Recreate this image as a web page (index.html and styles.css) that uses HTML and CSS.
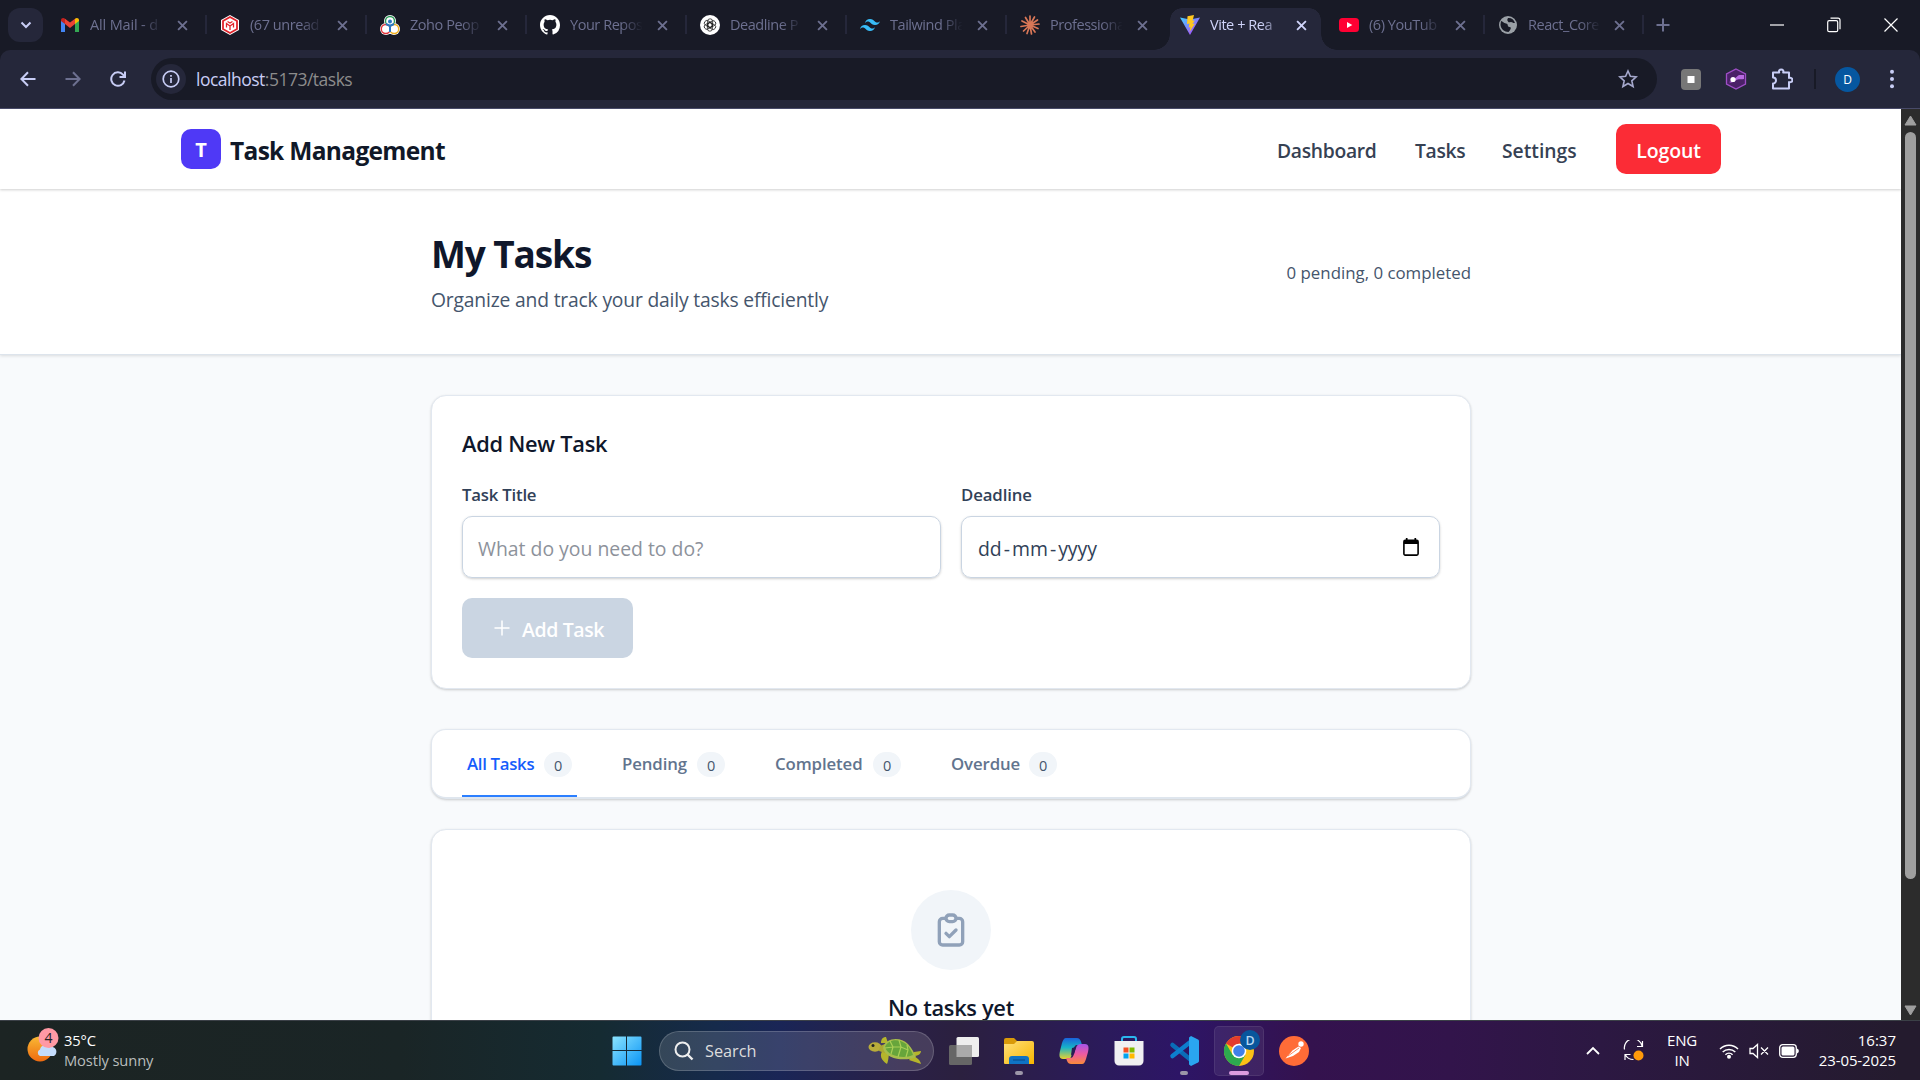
FILE: index.html
```html
<!DOCTYPE html>
<html lang="en">
<head>
<meta charset="utf-8">
<title>Task Management</title>
<link rel="stylesheet" href="styles.css">
</head>
<body>
<svg class="defs" width="0" height="0" aria-hidden="true">
  <defs>
    <symbol id="x" viewBox="0 0 10 10"><path d="M1 1l8 8M9 1L1 9" fill="none" stroke="currentColor" stroke-width="1.7"/></symbol>
    <linearGradient id="viteA" x1="0" y1="0" x2="1" y2="1"><stop offset="0" stop-color="#41d1ff"/><stop offset="1" stop-color="#bd34fe"/></linearGradient>
    <linearGradient id="win" x1="0" y1="0" x2="1" y2="1"><stop offset="0" stop-color="#8be4ff"/><stop offset="1" stop-color="#0a94f5"/></linearGradient>
    <linearGradient id="sun" x1="0" y1="0" x2="0" y2="1"><stop offset="0" stop-color="#f9b934"/><stop offset="1" stop-color="#ee6a10"/></linearGradient>
    <linearGradient id="fold" x1="0" y1="0" x2="1" y2="1"><stop offset="0" stop-color="#ffe07a"/><stop offset="1" stop-color="#f8b500"/></linearGradient>
    <linearGradient id="copA" x1="0" y1="0" x2="0" y2="1"><stop offset="0" stop-color="#1a62dc"/><stop offset=".45" stop-color="#17b3c8"/><stop offset="1" stop-color="#e8d12e"/></linearGradient>
    <linearGradient id="copB" x1="0" y1="0" x2="0" y2="1"><stop offset="0" stop-color="#a454e8"/><stop offset=".5" stop-color="#ee5aa2"/><stop offset="1" stop-color="#f98b3a"/></linearGradient>
  </defs>
</svg>

<header class="browser">
  <div class="strip">
    <div class="tab-search"><svg width="12" height="8" viewBox="0 0 12 8"><path d="M1.5 1.5L6 6l4.500-4.500" fill="none" stroke="currentColor" stroke-width="2"/></svg></div>
    <div class="tabs">
      <div class="tab">
        <svg class="fav" viewBox="0 0 20 20"><path d="M1 17V5l4 3v9z" fill="#4285f4"/><path d="M15 8l4-3v12h-4z" fill="#34a853"/><path d="M1 5.500C1 2.800 3.500 2.500 5 3.700V9L1 6z" fill="#c5221f"/><path d="M5 3.700L10 7.500l5-3.800V9l-5 3.900L5 9z" fill="#ea4335"/><path d="M15 3.700c1.500-1.200 4-.9 4 1.800V6l-4 3z" fill="#fbbc04"/></svg>
        <span class="name">All Mail - d</span><svg class="close"><use href="#x"/></svg>
      </div>
      <div class="tab">
        <svg class="fav" viewBox="0 0 20 20"><path d="M10 0l9 5v10l-9 5-9-5V5z" fill="#fff"/><path d="M10 2l7 4v8l-7 4-7-4V6z" fill="none" stroke="#e0252c" stroke-width="1.800"/><path d="M10 15v-4L6.500 8.500v4M10 11l3.500-2.500v4M7.500 6.500l2.500 1.500 2.500-1.500" fill="none" stroke="#e0252c" stroke-width="1.300"/></svg>
        <span class="name">(67 unread</span><svg class="close"><use href="#x"/></svg>
      </div>
      <div class="tab">
        <svg class="fav" viewBox="0 0 20 20"><circle cx="10" cy="6" r="6" fill="#fff"/><circle cx="6" cy="14" r="6" fill="#fff"/><circle cx="14" cy="14" r="6" fill="#fff"/><g fill="none" stroke-width="1.400"><circle cx="10" cy="6" r="4.500" stroke="#2b9a58"/><circle cx="5.800" cy="14" r="4.500" stroke="#e2353c"/><circle cx="14.200" cy="14" r="4.500" stroke="#f2b01e"/><path d="M6 9l4 2 4-2M10 11v6" stroke="#2b78c5" stroke-width="2"/></g><circle cx="10" cy="6.500" r="2" fill="#2b78c5"/></svg>
        <span class="name">Zoho Peop</span><svg class="close"><use href="#x"/></svg>
      </div>
      <div class="tab">
        <svg class="fav" viewBox="0 0 16 16"><path fill="#fff" d="M8 0C3.580 0 0 3.580 0 8c0 3.540 2.290 6.530 5.470 7.590.4.070.55-.17.55-.38v-1.340c-2.230.48-2.690-1.070-2.690-1.070-.36-.92-.89-1.170-.89-1.170-.73-.5.050-.49.050-.49.8.060 1.230.83 1.230.83.720 1.220 1.870.87 2.330.66.070-.52.28-.87.500-1.070-1.770-.2-3.640-.89-3.640-3.950 0-.87.310-1.590.82-2.150-.08-.2-.36-1.020.080-2.120 0 0 .67-.21 2.200.82a7.600 7.600 0 0 1 4 0c1.530-1.040 2.200-.82 2.200-.82.440 1.100.16 1.920.080 2.120.51.560.82 1.270.82 2.150 0 3.070-1.870 3.750-3.650 3.950.29.250.54.730.54 1.480v2.200c0 .21.150.46.550.38A8 8 0 0 0 16 8c0-4.420-3.580-8-8-8z"/></svg>
        <span class="name">Your Repos</span><svg class="close"><use href="#x"/></svg>
      </div>
      <div class="tab">
        <svg class="fav" viewBox="0 0 20 20"><circle cx="10" cy="10" r="10" fill="#fff"/><g fill="none" stroke="#222" stroke-width=".8"><rect x="7.600" y="3.800" width="5" height="8.500" rx="2.500"/><rect x="7.600" y="3.800" width="5" height="8.500" rx="2.500" transform="rotate(60 10 10)"/><rect x="7.600" y="3.800" width="5" height="8.500" rx="2.500" transform="rotate(120 10 10)"/><rect x="7.600" y="3.800" width="5" height="8.500" rx="2.500" transform="rotate(180 10 10)"/><rect x="7.600" y="3.800" width="5" height="8.500" rx="2.500" transform="rotate(240 10 10)"/><rect x="7.600" y="3.800" width="5" height="8.500" rx="2.500" transform="rotate(300 10 10)"/></g></svg>
        <span class="name">Deadline P</span><svg class="close"><use href="#x"/></svg>
      </div>
      <div class="tab">
        <svg class="fav" viewBox="0 0 24 24"><path fill="#38bdf8" d="M12 4.800C8.800 4.800 6.800 6.400 6 9.600c1.200-1.600 2.600-2.200 4.200-1.800.91.230 1.570.89 2.290 1.620C13.670 10.620 15.030 12 18 12c3.200 0 5.200-1.600 6-4.800-1.200 1.600-2.600 2.200-4.200 1.800-.91-.23-1.570-.89-2.290-1.620C16.340 6.180 14.970 4.800 12 4.800zM6 12c-3.200 0-5.200 1.600-6 4.800 1.200-1.600 2.600-2.200 4.200-1.800.91.230 1.570.89 2.290 1.620C7.670 17.820 9.030 19.200 12 19.200c3.200 0 5.200-1.600 6-4.800-1.200 1.600-2.600 2.200-4.200 1.800-.91-.23-1.570-.89-2.290-1.620C10.340 13.380 8.970 12 6 12z"/></svg>
        <span class="name">Tailwind Pla</span><svg class="close"><use href="#x"/></svg>
      </div>
      <div class="tab">
        <svg class="fav" viewBox="0 0 20 20"><g stroke="#d97757" stroke-width="1.700" stroke-linecap="round"><path d="M10 10V1M10 10l4.500-8M10 10l7.500-5M10 10l9-1M10 10l8 3.500M10 10l5 7M10 10l1.500 9M10 10l-3 8.500M10 10l-6.500 6M10 10l-9 1.500M10 10L2 6M10 10L5.500 2.500"/></g><circle cx="10" cy="10" r="2.500" fill="#d97757"/></svg>
        <span class="name">Professiona</span><svg class="close"><use href="#x"/></svg>
      </div>
      <div class="tab active">
        <svg class="fav" viewBox="0 0 20 20"><path d="M0 2.500l10 2 10-2L10 20z" fill="url(#viteA)"/><path d="M14 0L7.500 1.300 7 9l2.500-.5-.8 4 1.800-.5L9.500 17l5.500-8.500-2.500.5 2.300-3.500-2.200.3z" fill="#ffc820"/></svg>
        <span class="name">Vite + Rea</span><svg class="close"><use href="#x"/></svg>
      </div>
      <div class="tab">
        <svg class="fav" viewBox="0 0 20 20"><rect y="3" width="20" height="14" rx="3.500" fill="#ff0033"/><path d="M8 7l5.300 3L8 13z" fill="#fff"/></svg>
        <span class="name">(6) YouTub</span><svg class="close"><use href="#x"/></svg>
      </div>
      <div class="tab">
        <svg class="fav" viewBox="0 0 20 20"><circle cx="10" cy="10" r="9" fill="#9aa0a6"/><path d="M3 6c2 0 2.500 2.500 5 2.500s1 3.500 3.500 3.500 1 3-1 5c-4 0-8-3-8-7.500zM10 3c3-.5 6 1.500 7 5-2 .5-2.500-1-4-1s-2 1-3-.5S9 5 10 3z" fill="#181a26"/></svg>
        <span class="name">React_Core</span><svg class="close"><use href="#x"/></svg>
      </div>
    </div>
    <svg class="new-tab" width="14" height="14" viewBox="0 0 14 14"><path d="M7 .5v13M.5 7h13" stroke="currentColor" stroke-width="2"/></svg>
    <div class="window-buttons">
      <svg width="14" height="14" viewBox="0 0 14 14"><path d="M0 7h14" stroke="#fff" stroke-width="1.200"/></svg>
      <svg width="14" height="16" viewBox="0 0 14 16" fill="none" stroke="#fff" stroke-width="1.200"><rect x=".7" y="3.700" width="10" height="11" rx="1.500"/><path d="M3.500 1.200H11a2 2 0 0 1 2 2v9"/></svg>
      <svg width="14" height="14" viewBox="0 0 14 14"><path d="M.5.5l13 13M13.500.5l-13 13" stroke="#fff" stroke-width="1.200"/></svg>
    </div>
  </div>
  <div class="toolbar">
    <div class="nav-buttons">
      <svg width="16" height="16" viewBox="0 0 16 16"><path d="M15.500 8H1.500M8 1.200L1.400 8 8 14.800" fill="none" stroke="currentColor" stroke-width="2"/></svg>
      <svg class="dim" width="16" height="16" viewBox="0 0 16 16"><path d="M.5 8h14M8 1.200L14.600 8 8 14.800" fill="none" stroke="currentColor" stroke-width="2"/></svg>
      <svg width="16" height="16" viewBox="0 0 16 16"><path d="M14.500 9.500A6.700 6.700 0 1 1 13 3.600L15 6M15 .5V6H9.500" fill="none" stroke="currentColor" stroke-width="2"/></svg>
    </div>
    <div class="omnibox">
      <div class="site-info"><svg width="18" height="18" viewBox="0 0 18 18" fill="none" stroke="currentColor" stroke-width="1.700"><circle cx="9" cy="9" r="7.800"/><path d="M9 8v5M9 5v1.700"/></svg></div>
      <span class="url"><b>localhost</b>:5173/tasks</span>
      <svg class="star" width="20" height="20" viewBox="0 0 20 20"><path d="M10 2l2.400 5.300 5.800.6-4.400 3.900 1.300 5.700-5.100-3-5.100 3 1.300-5.700-4.400-3.900 5.800-.6z" fill="none" stroke="currentColor" stroke-width="1.600"/></svg>
    </div>
    <div class="extensions">
      <svg width="20" height="21" viewBox="0 0 20 21"><rect width="20" height="21" rx="4" fill="#777"/><rect x="6.500" y="7" width="7" height="7" fill="#fff"/></svg>
      <svg width="22" height="22" viewBox="0 0 22 22"><path d="M11 1l9.500 5v10L11 21l-9.500-5V6z" fill="#4b2168" stroke="#a04fc8" stroke-width="1.300"/><path d="M4 14c2.500 0 3-4 5.500-4s3-3.500 5.500-3h4v4c-4 1-5-.5-7.500 1S7 15.500 4 14z" fill="#b76ae0"/><circle cx="8" cy="11.500" r="2.600" fill="#fff"/></svg>
      <svg width="22" height="22" viewBox="0 0 22 22"><path d="M2 4.500h6.200a2.200 2.200 0 1 1 4 0H18V10a2.300 2.300 0 1 1 0 4v6.500H2V15.500a3 3 0 0 0 0-6z" fill="none" stroke="currentColor" stroke-width="2" stroke-linejoin="round"/></svg>
      <i class="divider"></i>
      <span class="avatar">D</span>
      <svg class="dots" width="6" height="20" viewBox="0 0 6 20"><circle cx="3" cy="2.800" r="2"/><circle cx="3" cy="10" r="2"/><circle cx="3" cy="17.200" r="2"/></svg>
    </div>
  </div>
</header>

<div class="viewport">
  <div class="page">
    <nav class="navbar">
      <div class="brand"><span class="logo">T</span><span class="brand-name">Task Management</span></div>
      <div class="links">
        <a class="link dash">Dashboard</a><a class="link tsk">Tasks</a><a class="link set">Settings</a>
        <button class="logout">Logout</button>
      </div>
    </nav>
    <section class="heading">
      <div>
        <h1>My Tasks</h1>
        <p class="sub">Organize and track your daily tasks efficiently</p>
      </div>
      <p class="summary">0 pending, 0 completed</p>
    </section>
    <main>
      <section class="card form">
        <h2>Add New Task</h2>
        <div class="fields">
          <div class="field">
            <span class="label title-label">Task Title</span>
            <div class="input"><span class="placeholder">What do you need to do?</span></div>
          </div>
          <div class="field">
            <span class="label">Deadline</span>
            <div class="input date"><span class="date-text">dd<i>-</i>mm<i>-</i>yyyy</span><svg width="16" height="18" viewBox="0 0 16 18"><path d="M3.700 0v3M12.300 0v3" stroke="#000" stroke-width="1.700"/><rect x=".9" y="2.400" width="14.200" height="14.700" rx="1.300" fill="none" stroke="#000" stroke-width="1.600"/><path d="M1 2h14v4H1z"/></svg></div>
          </div>
        </div>
        <button class="add"><svg width="16" height="16" viewBox="0 0 16 16"><path d="M8 .5v15M.5 8h15" stroke="#fff" stroke-width="1.500"/></svg><span>Add Task</span></button>
      </section>
      <section class="card filters">
        <div class="filter on"><span class="f1">All Tasks</span><b>0</b></div>
        <div class="filter"><span class="f2">Pending</span><b>0</b></div>
        <div class="filter"><span class="f3">Completed</span><b>0</b></div>
        <div class="filter"><span class="f4">Overdue</span><b>0</b></div>
      </section>
      <section class="card empty">
        <div class="empty-icon"><svg width="40" height="40" viewBox="0 0 24 24" fill="none" stroke="#90a1b9" stroke-width="2" stroke-linecap="round" stroke-linejoin="round"><path d="M9 5H7a2 2 0 00-2 2v12a2 2 0 002 2h10a2 2 0 002-2V7a2 2 0 00-2-2h-2M9 5a2 2 0 002 2h2a2 2 0 002-2M9 5a2 2 0 012-2h2a2 2 0 012 2m-6 9l2 2 4-4"/></svg></div>
        <h3>No tasks yet</h3>
      </section>
    </main>
  </div>
  <div class="scrollbar">
    <svg width="13" height="11" viewBox="0 0 13 11"><path d="M6.500 1L12 10H1z" fill="#9f9f9f" stroke="#9f9f9f" stroke-linejoin="round"/></svg>
    <i class="thumb"></i>
    <svg width="13" height="11" viewBox="0 0 13 11"><path d="M6.500 10L12 1H1z" fill="#9f9f9f" stroke="#9f9f9f" stroke-linejoin="round"/></svg>
  </div>
</div>

<footer class="taskbar">
  <div class="weather">
    <svg width="34" height="38" viewBox="0 0 34 38"><circle cx="14" cy="22" r="12.500" fill="url(#sun)"/><path d="M14 29a3.500 3.500 0 0 1 0-6.500 5 5 0 0 1 9-2 4.500 4.500 0 0 1 5 8.500z" fill="#c4dcfb"/><circle cx="22.500" cy="11" r="10" fill="#ff99a4"/><text x="22.500" y="16" text-anchor="middle" class="badge-text">4</text></svg>
    <div class="weather-text"><span>35°C</span><span class="muted">Mostly sunny</span></div>
  </div>
  <div class="apps">
    <div class="app start"><svg width="30" height="30" viewBox="0 0 30 30"><path d="M1.500.5H14V14H.5V1.500a1 1 0 0 1 1-1zM15 .5h13.500a1 1 0 0 1 1 1V14H15zM.5 15H14v14.500H1.500a1 1 0 0 1-1-1zM15 15h14.500v13.500a1 1 0 0 1-1 1H15z" fill="url(#win)"/></svg></div>
    <div class="search">
      <svg width="20" height="20" viewBox="0 0 20 20" fill="none" stroke="#eee" stroke-width="2"><circle cx="8.500" cy="8.500" r="7"/><path d="M13.500 13.500l5 5" stroke-width="2.400"/></svg>
      <span>Search</span>
      <svg class="turtle" width="54" height="30" viewBox="0 0 54 30"><path d="M13 7c0-4 2-6 5-6l2 6zM15 14c-4 5-2 10 4 14 2-4 1-9 3-12zM41 24l12 4c-1-4-4-7-9-8zM46 16l7-1c0 3-3 5-8 5z" fill="#b5b52c"/><ellipse cx="7" cy="11" rx="6.500" ry="4.700" fill="#b9ac3a"/><path d="M12 10l5-2v9l-6-2z" fill="#aaa832"/><path d="M15 12C17 2 32 0 40 8c4 4 6 9 8 13-8 4-30 4-33-9z" fill="#a7bd4c"/><path d="M17 11C20 3 31 2 38 8c4 4 6 8 7 11-8 4-25 2-28-8z" fill="#67a53b"/><path d="M22 5l3 6-2 7M31 4l2 7-3 10M39 9l1 5-2 7M17 12l8-1 8 0 7 3" fill="none" stroke="#a9cf57" stroke-width="1.200"/><circle cx="5" cy="9.500" r="1.500" fill="#222"/></svg>
    </div>
    <div class="app"><svg width="30" height="28" viewBox="0 0 30 28"><rect x="7.500" y="0" width="22.500" height="20" rx="1.500" fill="#eee"/><rect y="8" width="23" height="20" rx="1.500" fill="#666"/><path d="M7.500 8H23v12H7.500z" fill="#aaa"/></svg></div>
    <div class="app run"><svg width="30" height="28" viewBox="0 0 30 28"><path d="M0 3a2 2 0 0 1 2-2h8l3 3v4H0z" fill="#d99a09"/><path d="M0 7h10l3-3h15a2 2 0 0 1 2 2v21H1a1 1 0 0 1-1-1z" fill="url(#fold)"/><path d="M5 27v-5a3 3 0 0 1 3-3h14a3 3 0 0 1 3 3v5z" fill="#0f73c4"/><path d="M9 23h12" stroke="#0a4f91" stroke-width="1.200"/></svg></div>
    <div class="app"><svg width="30" height="28" viewBox="0 0 30 28"><path d="M7 1h11c3 0 4 3 5 7h-5c-2 0-3 2-4 5l-2 7c-1 2-2 2-4 2H4c-4 0-4-4-3-8l2-8c1-3 2-5 4-5z" fill="url(#copA)"/><path d="M23 27H12c-3 0-4-3-5-6h4c2 0 3-1 4-4l2-6c1-3 2-4 5-4h4c4 0 4 4 3 8l-2 7c-1 3-2 5-4 5z" fill="url(#copB)"/><path d="M13 11l4-1-2 7-3 1z" fill="#2a1c55"/></svg></div>
    <div class="app"><svg width="30" height="30" viewBox="0 0 30 30"><path d="M8 6V3a2 2 0 0 1 2-2h10a2 2 0 0 1 2 2v3" fill="none" stroke="#2bb7ee" stroke-width="2"/><path d="M.5 5h29v20a4.500 4.500 0 0 1-4.500 4.500H5A4.500 4.500 0 0 1 .5 25z" fill="#f0f0f2"/><path d="M9.500 11.500h5v5h-5z" fill="#f25022"/><path d="M15.500 11.500h5v5h-5z" fill="#7fba00"/><path d="M9.500 17.500h5v5h-5z" fill="#00a4ef"/><path d="M15.500 17.500h5v5h-5z" fill="#ffb900"/></svg></div>
    <div class="app run"><svg width="30" height="30" viewBox="0 0 30 30"><path d="M3.500 9L22 24" stroke="#0a6db8" stroke-width="4.500" stroke-linecap="round"/><path d="M3.500 20L22 5.500" stroke="#0d7fce" stroke-width="4.500" stroke-linecap="round"/><path d="M22 0l7 3.500a2 2 0 0 1 1 1.500v20a2 2 0 0 1-1 1.500L22 30l-2-1.500V1.500z" fill="#2aa5f0"/></svg></div>
    <div class="app current"><svg width="38" height="38" viewBox="0 0 38 38"><circle cx="15" cy="23" r="15" fill="#fbc116"/><path d="M15 23L2 15.500A15 15 0 0 1 28 15.500H15z" fill="#e33b2e"/><path d="M2 15.500a15 15 0 0 0 13 22.500l6.500-11.300L8.500 26.700z" fill="#2da94f"/><circle cx="15" cy="23" r="7.300" fill="#fff"/><circle cx="15" cy="23" r="5.800" fill="#3f80ea"/><circle cx="26" cy="12" r="10" fill="#08569c"/><text x="26" y="16.500" text-anchor="middle" class="profile-text">D</text></svg></div>
    <div class="app"><svg width="30" height="30" viewBox="0 0 30 30"><circle cx="15" cy="15" r="15" fill="#ff6c37"/><path d="M6.500 22.500l7-8 6-4 2.500 1.500-2 4-6 4z" fill="#fff"/><circle cx="22" cy="8" r="2.700" fill="#fff"/><path d="M9 20l11-8" stroke="#ff6c37" stroke-width=".8"/></svg></div>
  </div>
  <div class="tray">
    <svg width="14" height="9" viewBox="0 0 14 9"><path d="M1 8l6-6 6 6" fill="none" stroke="#fff" stroke-width="1.800"/></svg>
    <svg class="sync" width="22" height="22" viewBox="0 0 22 22" fill="none" stroke="#fff" stroke-width="1.200"><path d="M1.500 9.500A8.500 8.500 0 0 1 19 6M19.500 1v5.500h-5.500M2 20v-5.500h5.500M2.500 15c1.500 3 5 4.500 8 4.500"/><circle cx="15.500" cy="15.500" r="5" fill="#ff9a0a" stroke="none"/></svg>
    <div class="lang"><span>ENG</span><span>IN</span></div>
    <svg class="wifi" width="20" height="16" viewBox="0 0 20 16" fill="none" stroke="#fff" stroke-width="1.500"><path d="M1 6a12.700 12.700 0 0 1 18 0M3.700 9a9 9 0 0 1 12.600 0M6.400 11.700a5.200 5.200 0 0 1 7.200 0"/><circle cx="10" cy="13.800" r="2" fill="#fff" stroke="none"/></svg>
    <svg class="sound" width="20" height="16" viewBox="0 0 20 16" fill="none" stroke="#fff" stroke-width="1.300"><path d="M1 5.500h3L8.500 1.500v13L4 10.500H1zM12 4.500l7 7M19 4.500l-7 7"/></svg>
    <svg class="battery" width="21" height="14" viewBox="0 0 21 14"><rect x=".7" y=".7" width="16.600" height="12.600" rx="3" fill="none" stroke="#fff" stroke-width="1.300"/><rect x="2.500" y="2.500" width="13" height="9" rx="1.500" fill="#fff"/><path d="M18 4.500a2.600 2.600 0 0 1 0 5z" fill="#fff"/></svg>
    <div class="clock"><span>16:37</span><span class="day">23-05-2025</span></div>
  </div>
</footer>
</body>
</html>
```
FILE: styles.css
```css
* { box-sizing: border-box; margin: 0; padding: 0; }
body { width: 1920px; height: 1080px; overflow: hidden; display: flex; flex-direction: column; font-family: "Open Sans", "Noto Sans", sans-serif; background: #f8fafc; }
svg { display: block; flex: none; }
.defs { position: absolute; }
button { border: 0; font-family: inherit; }
span, a { white-space: nowrap; }

/* browser chrome */
.browser { height: 109px; flex: none; background: #181a26; border-bottom: 1px solid #484a68; }
.strip { height: 50px; display: flex; align-items: center; padding-left: 8px; }
.tab-search { width: 35px; height: 34px; border-radius: 12px; background: #25273a; color: #c8cdf5; display: flex; align-items: center; justify-content: center; margin-right: 4px; }
.tabs { display: flex; height: 50px; }
.tab { position: relative; width: 160px; height: 50px; padding-left: 13px; display: flex; align-items: center; color: #6d7090; }
.tab::after { content: ""; position: absolute; right: 0; top: 15px; width: 2px; height: 19px; background: #25273a; }
.tab:nth-child(n+8) { width: 159px; }
.tab:nth-child(7)::after, .tab.active::after { display: none; }
.fav { width: 20px; height: 20px; position: relative; }
.name { position: relative; width: 75px; margin-left: 10px; overflow: hidden; font-size: 14.500px; letter-spacing: -.45px; line-height: 22px; -webkit-mask-image: linear-gradient(90deg, #000 68%, transparent 97%); mask-image: linear-gradient(90deg, #000 68%, transparent 97%); }
.tab:first-child .name { letter-spacing: -.15px; }
.close { position: relative; width: 11px; height: 11px; margin-left: 12px; }
.tab:nth-child(n+8) .close { margin-left: 11px; }
.active { color: #d0d4fa; }
.active::before { content: ""; position: absolute; left: -13px; top: 8px; width: 183px; height: 42px; background:
  radial-gradient(circle at 0 0, transparent 15.500px, #25273a 16px) 0 26px / 16px 16px no-repeat,
  radial-gradient(circle at 16px 0, transparent 15.500px, #25273a 16px) 167px 26px / 16px 16px no-repeat,
  radial-gradient(circle at 12px 12px, #25273a 11.500px, transparent 12px) 16px 0 / 12px 12px no-repeat,
  radial-gradient(circle at 0 12px, #25273a 11.500px, transparent 12px) 155px 0 / 12px 12px no-repeat,
  linear-gradient(#25273a, #25273a) 28px 0 / 127px 42px no-repeat,
  linear-gradient(#25273a, #25273a) 16px 12px / 151px 30px no-repeat; }
.new-tab { color: #6d7090; margin-left: 12px; }
.window-buttons { margin-left: auto; margin-right: 22px; display: flex; gap: 43px; align-items: center; }
.toolbar { height: 58px; background: #25273a; border-radius: 10px 10px 0 0; display: flex; align-items: center; padding-left: 20px; }
.nav-buttons { display: flex; gap: 29px; color: #c8cdf5; }
.nav-buttons .dim { color: #6d7090; }
.omnibox { width: 1506px; height: 42px; margin-left: 25px; padding: 0 19px 0 5px; border-radius: 21px; background: #181a26; display: flex; align-items: center; }
.site-info { width: 30px; height: 30px; border-radius: 50%; background: #25273a; color: #c8cdf5; display: flex; align-items: center; justify-content: center; }
.url { margin-left: 10px; font-size: 17.500px; letter-spacing: -.5px; color: #8c8c8c; }
.url b { font-weight: 400; color: #c8cdf5; }
.star { margin-left: auto; color: #a5a8cc; }
.extensions { display: flex; align-items: center; margin-left: 24px; color: #c8cdf5; }
.extensions svg + svg { margin-left: 24px; }
.divider { width: 2px; height: 20px; margin-left: 21px; background: #181a26; }
.avatar { width: 25px; height: 25px; margin-left: 19px; border-radius: 50%; background: #0657a0; color: #fff; font-size: 12px; line-height: 25px; text-align: center; }
.extensions .dots { margin-left: 29px; fill: #c8cdf5; }

/* page */
.viewport { height: 911px; flex: none; display: flex; overflow: hidden; }
.page { width: 1901px; height: 911px; overflow: hidden; color: #0f172b; }
.navbar { position: relative; height: 80px; padding: 0 180px 0 181px; display: flex; justify-content: space-between; align-items: center; background: #fff; box-shadow: 0 1px 3px rgba(0,0,0,.12), 0 1px 2px rgba(0,0,0,.08); }
.brand { display: flex; align-items: center; }
.logo { width: 40px; height: 40px; border-radius: 10px; background: #4f39f6; color: #fff; font-size: 20px; font-weight: 700; line-height: 41px; text-align: center; }
.brand-name { margin-left: 9px; font-size: 24.500px; letter-spacing: -.68px; font-weight: 700; line-height: 40px; padding-top: 3px; color: #101828; }
.links { display: flex; align-items: center; }
.link { font-size: 19.300px; letter-spacing: -.3px; font-weight: 550; color: #364153; margin-right: 40px; padding-top: 2px; }
.dash { width: 98px; } .tsk { width: 47px; } .set { width: 74px; letter-spacing: 0; }
.logout { width: 105px; height: 50px; padding-top: 2px; border-radius: 10px; background: #fb2c36; color: #fff; font-size: 19.500px; letter-spacing: -.1px; font-weight: 600; }
.heading { height: 166px; padding: 0 430px 0 431px; display: flex; align-items: center; justify-content: space-between; background: #fff; border-bottom: 1px solid #dde4ec; box-shadow: 0 1px 3px rgba(0,0,0,.12); }
.heading > div { padding-top: 2px; }
h1 { font-size: 37px; letter-spacing: -1.100px; font-weight: 700; line-height: 45px; }
.sub { font-size: 19.300px; letter-spacing: -.18px; line-height: 30px; margin-top: 9px; color: #45556c; }
.summary { font-size: 16.850px; color: #45556c; padding-top: 2px; }
main { padding: 40px 430px 0 431px; display: flex; flex-direction: column; }
.card { background: #fff; border: 1px solid #e2e8f0; border-radius: 15px; box-shadow: 0 1px 3px rgba(0,0,0,.12), 0 1px 2px rgba(0,0,0,.08); }
.form { height: 294px; padding: 30px; }
h2 { font-size: 21.800px; letter-spacing: -.25px; font-weight: 550; line-height: 35px; }
.fields { display: flex; gap: 20px; margin-top: 21px; }
.field { flex: 1; }
.label { display: block; font-size: 16.800px; letter-spacing: -.12px; font-weight: 550; line-height: 25px; color: #314158; }
.title-label { letter-spacing: -.22px; }
.input { height: 62px; margin-top: 9px; padding: 2px 15px 0; border: 1px solid #cad5e2; border-radius: 10px; box-shadow: 0 1px 3px rgba(0,0,0,.12), 0 1px 2px rgba(0,0,0,.08); display: flex; align-items: center; font-size: 19.400px; color: #314158; }
.placeholder { color: #8d929b; }
.date { justify-content: space-between; padding: 2px 20px 0 16px; }
.date svg { margin-top: -2px; }
.date-text i { font-style: normal; margin: 0 2px; }
.add { width: 171px; height: 60px; margin-top: 20px; border-radius: 10px; background: #cad5e2; color: #fff; display: flex; align-items: center; padding-left: 32px; font-size: 19.500px; letter-spacing: -.4px; font-weight: 600; }
.add span { margin-left: 12px; padding-top: 2px; }
.filters { height: 70px; margin-top: 40px; padding: 0 30px; display: flex; gap: 40px; border-bottom: 2px solid #dfe6ee; }
.filter { height: 67px; padding: 0 5px; display: flex; align-items: flex-start; padding-top: 22px; font-size: 16.800px; letter-spacing: -.1px; font-weight: 550; line-height: 24px; color: #62748e; }
.filter b { width: 28px; height: 25px; margin-left: 10px; border-radius: 13px; background: #f1f5f9; color: #45556c; font-size: 14.500px; font-weight: 500; line-height: 27px; text-align: center; }
.on { color: #155dfc; border-bottom: 2px solid #2b7fff; }
.f1 { width: 67px; letter-spacing: -.3px; } .f2 { width: 65px; } .f3 { width: 88px; } .f4 { width: 68px; }
.empty { height: 300px; margin-top: 30px; padding-top: 60px; display: flex; flex-direction: column; align-items: center; }
.empty-icon { width: 80px; height: 80px; border-radius: 50%; background: #f1f5f9; display: flex; align-items: center; justify-content: center; }
h3 { margin-top: 20px; font-size: 21.800px; letter-spacing: -.3px; font-weight: 550; line-height: 35px; }
.scrollbar { width: 19px; background: #2c2c2c; display: flex; flex-direction: column; align-items: center; padding: 6px 0 4px; }
.thumb { width: 11px; height: 747px; margin: 6px 0 auto; border-radius: 6px; background: #9f9f9f; }

/* taskbar */
.taskbar { height: 60px; flex: none; display: flex; border-top: 1px solid #3b4047; color: #fff; background: linear-gradient(90deg, #1c2423 0, #1a2526 400px, #152b32 600px, #162a4c 720px, #1a2556 780px, #2a2047 900px, #2b203f 960px, #2b1a5c 1110px, #2d1566 1180px, #34124e 1310px, #32144b 1450px, #2c1842 1600px, #241b2e 1900px); }
.weather { width: 575px; display: flex; padding: 6px 0 0 26px; }
.weather-text { display: flex; flex-direction: column; margin-left: 4px; margin-top: 3px; font-size: 14.700px; letter-spacing: -.1px; line-height: 20px; }
.muted { color: #b9bdbd; }
.badge-text { font-size: 14px; fill: #222; }
.profile-text { font-size: 12.500px; font-weight: 600; fill: #b9d7f2; }
.apps { display: flex; align-items: center; gap: 5px; padding-left: 27px; }
.app { position: relative; width: 50px; height: 50px; display: flex; align-items: center; justify-content: center; border-radius: 5px; }
.start { margin-right: 2px; }
.search { width: 275px; height: 40px; border: 1px solid #ffffff2e; border-radius: 20px; background: #ffffff22; display: flex; align-items: center; padding: 0 11px 0 14px; color: #ddd; font-size: 16.300px; }
.search span { margin-left: 11px; }
.turtle { margin-left: auto; }
.run::after, .current::after { content: ""; position: absolute; left: 21px; bottom: 1px; width: 8px; height: 4px; border-radius: 2px; background: #9c96a8; }
.current { background: #ffffff12; border: 1px solid #ffffff14; }
.current svg { margin: -8px -8px 0 0; }
.current::after { left: 14px; bottom: 0; width: 20px; background: #dc9be0; }
.tray { margin-left: auto; display: flex; align-items: center; padding-right: 24px; font-size: 15px; line-height: 20px; }
.sync { margin-left: 23px; }
.lang { display: flex; flex-direction: column; align-items: center; width: 32px; margin: 0 0 2px 21px; letter-spacing: -.2px; }
.wifi { margin-left: 21px; } .sound { margin-left: 10px; } .battery { margin-left: 10px; }
.clock { width: 87px; margin: 0 0 2px 9px; display: flex; flex-direction: column; align-items: flex-end; }
.day { letter-spacing: -.1px; }
```
